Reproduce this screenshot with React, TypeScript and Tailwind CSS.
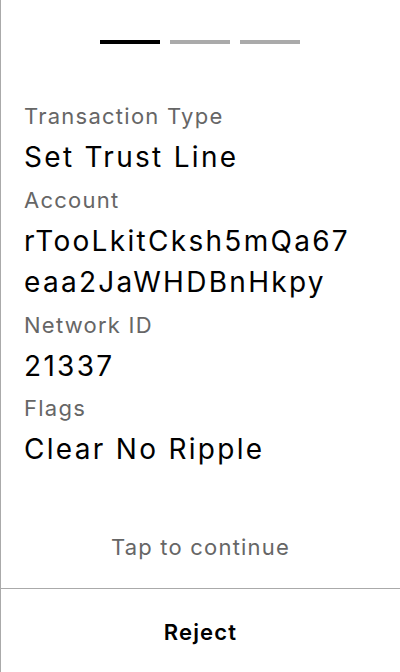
import React from "react";

export default function App() {
  const rows: [string, string][] = [
    ["Transaction Type", "Set Trust Line"],
    ["Account", "rTooLkitCksh5mQa67eaa2JaWHDBnHkpy"],
    ["Network ID", "21337"],
    ["Flags", "Clear No Ripple"],
  ];
  return (
    <div
      className="w-[400px] h-[672px] bg-white border-l border-[#aaaaaa] flex flex-col text-black"
      style={{ fontFamily: "Inter, 'Noto Sans', sans-serif" }}
    >
      <div className="flex justify-center gap-[10px] pt-[40px] -ml-[1px]">
        <div className="w-[60px] h-[4px] bg-black" />
        <div className="w-[60px] h-[4px] bg-[#aaaaaa]" />
        <div className="w-[60px] h-[4px] bg-[#aaaaaa]" />
      </div>
      <div className="flex flex-col pl-[23px] pr-[42px] pt-[51px] flex-1">
        {rows.map(([label, value]) => (
          <div key={label} className="flex flex-col">
            <div className="text-[22px] leading-[42px] tracking-[1.25px] text-[#666666]">{label}</div>
            <div className="text-[28px] leading-[41.5px] tracking-[2.3px] break-all">{value}</div>
          </div>
        ))}
      </div>
      <div className="text-center text-[22px] leading-[28px] tracking-[1.2px] text-[#666666] pb-[27px]">
        Tap to continue
      </div>
      <div className="border-t border-[#aaaaaa] h-[84px] pt-[3px] flex items-center justify-center">
        <span className="text-[22px] font-semibold tracking-[1.2px]">Reject</span>
      </div>
    </div>
  );
}
